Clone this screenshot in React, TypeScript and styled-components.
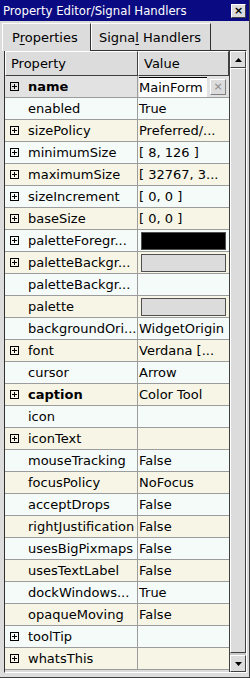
import React from 'react'
import styled, { createGlobalStyle } from 'styled-components'

const Global = createGlobalStyle`
  html, body { margin: 0; padding: 0; background: #dcdcdc; }
  * { box-sizing: border-box; }
`

const Window = styled.div`
  width: 250px;
  height: 678px;
  background: #dcdcdc;
  display: flex;
  flex-direction: column;
  font-family: 'DejaVu Sans', Verdana, sans-serif;
  font-size: 13px;
  color: #000;
  border-right: 1px solid #404040;
  border-bottom: 1px solid #404040;
`

const TitleBar = styled.div`
  height: 21px;
  flex: none;
  background: #0a0a82;
  color: #fff;
  display: flex;
  align-items: center;
  justify-content: space-between;
  padding: 0 3px 0 3px;
  font-family: 'DejaVu Sans Condensed', 'DejaVu Sans', sans-serif;
  font-stretch: condensed;
  font-size: 13px;
`

const CloseBtn = styled.div`
  width: 15px;
  height: 14px;
  background: #dcdcdc;
  border: 1px solid;
  border-color: #fff #404040 #404040 #fff;
  display: flex;
  align-items: center;
  justify-content: center;
  color: #000;
  font-family: 'DejaVu Sans', sans-serif;
  font-stretch: normal;
  font-size: 11px;
  font-weight: bold;
  line-height: 1;
`

const TabBar = styled.div`
  height: 29px;
  flex: none;
  display: flex;
  align-items: flex-end;
  padding: 0 0 0 2px;
`

const Tab = styled.div<{ $active?: boolean; $w: number; $pl: number }>`
  width: ${(p) => p.$w}px;
  height: ${(p) => (p.$active ? 28 : 27)}px;
  padding-left: ${(p) => p.$pl}px;
  display: flex;
  align-items: center;
  white-space: pre;
  border: 1px solid;
  border-bottom: none;
  border-color: #fff #303030 transparent #fff;
  font-size: 13px;
  position: relative;
  z-index: ${(p) => (p.$active ? 2 : 1)};
  margin-bottom: ${(p) => (p.$active ? -1 : 0)}px;
  background: #dcdcdc;
  u { text-underline-offset: 2px; }
`

const Frame = styled.div`
  flex: 1;
  margin: 0 2px 4px 4px;
  border: 1px solid;
  border-color: #303030 #fff #fff #303030;
  display: flex;
  min-height: 0;
`

const Table = styled.div`
  flex: 1;
  display: flex;
  flex-direction: column;
  min-width: 0;
`

const Header = styled.div`
  display: grid;
  grid-template-columns: 133px 1fr;
  height: 25px;
  flex: none;
`

const HeaderCell = styled.div`
  border: 1px solid;
  border-color: #fff #404040 #404040 #fff;
  padding-left: 5px;
  display: flex;
  align-items: center;
  font-size: 13px;
  background: #dcdcdc;
`

const Row = styled.div<{ $tone: 'sel' | 'beige' | 'light' }>`
  display: grid;
  grid-template-columns: 133px 1fr;
  height: 22px;
  flex: none;
  background: ${(p) =>
    p.$tone === 'sel' ? '#e2e2e2' : p.$tone === 'beige' ? '#f6f5e6' : '#f5fbf9'};
  border-bottom: 1px solid #9c9c9c;
`

const NameCell = styled.div<{ $bold?: boolean }>`
  display: flex;
  align-items: center;
  border-right: 1px solid #9c9c9c;
  padding-left: 5px;
  white-space: nowrap;
  overflow: hidden;
  font-weight: ${(p) => (p.$bold ? 'bold' : 'normal')};
`

const Expander = styled.span<{ $show: boolean }>`
  width: 9px;
  height: 9px;
  margin-right: 9px;
  flex: none;
  border: 1px solid #000;
  position: relative;
  visibility: ${(p) => (p.$show ? 'visible' : 'hidden')};
  &::before {
    content: '';
    position: absolute;
    left: 1px;
    right: 1px;
    top: 3px;
    height: 1px;
    background: #000;
  }
  &::after {
    content: '';
    position: absolute;
    top: 1px;
    bottom: 1px;
    left: 3px;
    width: 1px;
    background: #000;
  }
`

const ValueCell = styled.div`
  display: flex;
  align-items: center;
  padding-left: 1px;
  white-space: nowrap;
  overflow: hidden;
`

const Swatch = styled.div<{ $color: string }>`
  flex: 1;
  height: 18px;
  margin: 0 3px 0 2px;
  border: 1px solid #505050;
  background: ${(p) => p.$color};
`

const EditBox = styled.div`
  flex: 1;
  height: 21px;
  display: flex;
  align-items: center;
  background: #fff;
  border-top: 1px solid #000;
  margin-top: 1px;
`

const ClearBtn = styled.div`
  width: 16px;
  height: 16px;
  margin: 0 3px;
  flex: none;
  border: 1px solid;
  border-color: #fff #808080 #808080 #fff;
  background: #dcdcdc;
  color: #888;
  font-size: 11px;
  display: flex;
  align-items: center;
  justify-content: center;
`

const ScrollBar = styled.div`
  width: 17px;
  flex: none;
  display: flex;
  flex-direction: column;
  background: #c8c8c8;
  border-left: 1px solid #404040;
`

const ArrowBtn = styled.div`
  height: 17px;
  flex: none;
  background: #dcdcdc;
  border: 1px solid;
  border-color: #fff #404040 #404040 #fff;
  display: flex;
  align-items: center;
  justify-content: center;
`

const Trough = styled.div`
  flex: 1;
  display: flex;
  flex-direction: column;
`

const Thumb = styled.div`
  flex: 1;
  background: #dcdcdc;
  border: 1px solid;
  border-color: #fff #404040 #404040 #fff;
  margin-bottom: 2px;
`

type Prop = {
  name: string
  value?: string
  expand?: boolean
  bold?: boolean
  swatch?: string
}

const props: Prop[] = [
  { name: 'name', value: 'MainForm', expand: true, bold: true },
  { name: 'enabled', value: 'True' },
  { name: 'sizePolicy', value: 'Preferred/...', expand: true },
  { name: 'minimumSize', value: '[ 8, 126 ]', expand: true },
  { name: 'maximumSize', value: '[ 32767, 3...', expand: true },
  { name: 'sizeIncrement', value: '[ 0, 0 ]', expand: true },
  { name: 'baseSize', value: '[ 0, 0 ]', expand: true },
  { name: 'paletteForegr...', swatch: '#000', expand: true },
  { name: 'paletteBackgr...', swatch: '#dcdcdc', expand: true },
  { name: 'paletteBackgr...', value: '' },
  { name: 'palette', swatch: '#dcdcdc' },
  { name: 'backgroundOri...', value: 'WidgetOrigin' },
  { name: 'font', value: 'Verdana [...', expand: true },
  { name: 'cursor', value: 'Arrow' },
  { name: 'caption', value: 'Color Tool', expand: true, bold: true },
  { name: 'icon', value: '' },
  { name: 'iconText', value: '', expand: true },
  { name: 'mouseTracking', value: 'False' },
  { name: 'focusPolicy', value: 'NoFocus' },
  { name: 'acceptDrops', value: 'False' },
  { name: 'rightJustification', value: 'False' },
  { name: 'usesBigPixmaps', value: 'False' },
  { name: 'usesTextLabel', value: 'False' },
  { name: 'dockWindows...', value: 'True' },
  { name: 'opaqueMoving', value: 'False' },
  { name: 'toolTip', value: '', expand: true },
  { name: 'whatsThis', value: '', expand: true },
]

const Arrow = ({ up }: { up?: boolean }) => (
  <svg width="7" height="4" viewBox="0 0 7 4">
    <polygon points={up ? '3.5,0 7,4 0,4' : '0,0 7,0 3.5,4'} fill="#000" />
  </svg>
)

export default function App(): JSX.Element {
  return (
    <Window>
      <Global />
      <TitleBar>
        <span>Property Editor/Signal Handlers</span>
        <CloseBtn>×</CloseBtn>
      </TitleBar>
      <TabBar>
        <Tab $active $w={89} $pl={9}>
          <span>
            P<u>r</u>operties
          </span>
        </Tab>
        <Tab $w={120} $pl={7}>
          <span>
            Signa<u>l</u> Handlers
          </span>
        </Tab>
      </TabBar>
      <Frame>
        <Table>
          <Header>
            <HeaderCell>Property</HeaderCell>
            <HeaderCell>Value</HeaderCell>
          </Header>
          {props.map((p, i) => (
            <Row key={i} $tone={i === 0 ? 'sel' : i % 2 === 0 ? 'beige' : 'light'}>
              <NameCell $bold={p.bold}>
                <Expander $show={!!p.expand} />
                {p.name}
              </NameCell>
              <ValueCell>
                {i === 0 ? (
                  <>
                    <EditBox>{p.value}</EditBox>
                    <ClearBtn>×</ClearBtn>
                  </>
                ) : p.swatch ? (
                  <Swatch $color={p.swatch} />
                ) : (
                  p.value
                )}
              </ValueCell>
            </Row>
          ))}
        </Table>
        <ScrollBar>
          <ArrowBtn>
            <Arrow up />
          </ArrowBtn>
          <Trough>
            <Thumb />
          </Trough>
          <ArrowBtn>
            <Arrow />
          </ArrowBtn>
        </ScrollBar>
      </Frame>
    </Window>
  )
}
